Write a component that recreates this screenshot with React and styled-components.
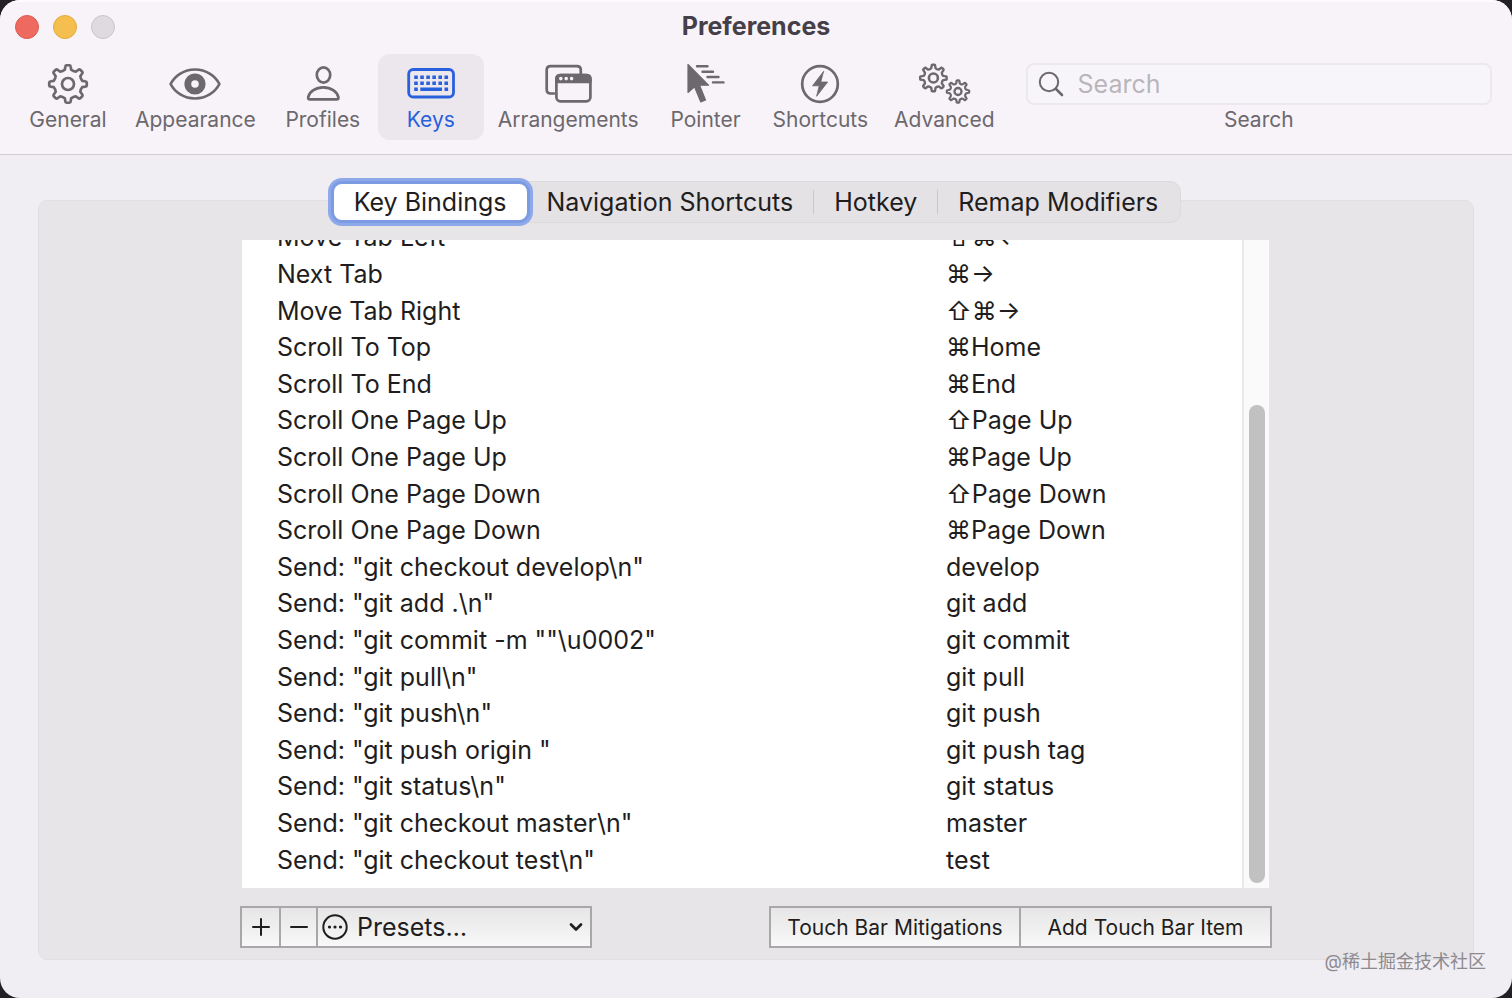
import React, {useState} from 'react'
import styled, {createGlobalStyle} from 'styled-components'

const GlobalStyle = createGlobalStyle`
  * {
    box-sizing: border-box;
  }
  body {
    margin: 0;
    background: #222024;
    font-family: Inter, 'Noto Sans CJK SC', sans-serif;
    color: #1f1d20;
  }
  button,
  input,
  select {
    font: inherit;
    color: inherit;
    margin: 0;
    padding: 0;
    border: 0;
    background: none;
  }
`

const Window = styled.main`
  position: relative;
  display: flex;
  flex-direction: column;
  min-height: 100vh;
  border-radius: 20px;
  background: #f0eef3;
  overflow: hidden;
`

const Header = styled.header`
  background: #f7f3f9;
  border-bottom: 1px solid #cfcbd1;
  box-shadow: inset 0 2px 0 #fcfafd;
`

const TitleBar = styled.div`
  display: grid;
  grid-template-columns: 1fr auto 1fr;
  align-items: center;
  height: 54px;
  padding: 0 15px;
`

const Lights = styled.div`
  display: flex;
  gap: 14px;
`

const Light = styled.button`
  width: 24px;
  height: 24px;
  border-radius: 50%;
  border: 1px solid ${p => p.$edge};
  background: ${p => p.$color};
`

const Title = styled.h1`
  align-self: start;
  margin: 0;
  font-size: 25px;
  line-height: 52px;
  font-weight: 700;
  color: #454047;
`

const Toolbar = styled.nav`
  display: flex;
  gap: 2px;
  padding: 0 20px 14px 15px;
`

const ToolButton = styled.button`
  display: flex;
  flex-direction: column;
  align-items: center;
  min-width: 106px;
  height: 86px;
  padding: 8px 12px 0;
  border-radius: 12px;
  background: ${p => (p.$active ? '#ebe7ed' : 'transparent')};
  color: ${p => (p.$active ? '#2860de' : '#6c686d')};
  font-size: 21px;
  line-height: 28px;

  svg {
    display: block;
    flex: none;
  }
`

const SearchItem = styled.label`
  display: flex;
  flex: 1;
  flex-direction: column;
  align-items: center;
  gap: 1px;
  margin-left: 17px;
  padding-top: 9px;
  color: #6c686d;
  font-size: 21px;
  line-height: 28px;
`

const SearchField = styled.span`
  display: flex;
  align-items: center;
  gap: 14px;
  width: 100%;
  height: 42px;
  padding: 0 10px;
  border: 2px solid #ece8ee;
  border-radius: 8px;
  background: #f8f5fa;
`

const SearchInput = styled.input`
  flex: 1;
  min-width: 0;
  font-size: 25px;
  outline: 0;

  &::placeholder {
    color: #b9b5ba;
    opacity: 1;
  }
`

const Panel = styled.section`
  display: flex;
  flex: 1;
  flex-direction: column;
  align-items: center;
  margin: 45px 38px 38px;
  padding: 0 20px 11px;
  border: 1px solid #e2dfe4;
  border-radius: 9px;
  background: #e7e5e8;
`

const Tabs = styled.div`
  display: flex;
  align-items: center;
  height: 42px;
  margin: -20px 0 17px;
  padding: 0 2px;
  border: 1px solid #dddade;
  border-radius: 11px;
  background: #e4e2e5;
`

const Tab = styled.button`
  height: 36px;
  padding: 0 20px;
  border-radius: 8px;
  background: ${p => (p.$active ? '#fff' : 'transparent')};
  box-shadow: ${p => (p.$active ? '0 0 0 3px #7c9be2, 0 0 0 6px #8ea9ea' : 'none')};
  font-size: 25px;
  line-height: 34px;
  white-space: nowrap;
`

const Divider = styled.span`
  width: 1px;
  height: 24px;
  background: #cbc8cc;
`

const Content = styled.div`
  display: flex;
  flex: 1;
  flex-direction: column;
  gap: 18px;
  width: 100%;
  max-width: 1032px;
`

const List = styled.div`
  display: flex;
  flex: 1;
  margin: 0 3px 0 2px;
  background: #fff;
`

const Rows = styled.div`
  display: flex;
  flex: 1;
  flex-direction: column;
  justify-content: flex-end;
  height: 648px;
  padding: 0 35px 10px;
  overflow: hidden;
`

const Table = styled.table`
  flex: none;
  width: 100%;
  height: 659px;
  border-collapse: collapse;
  table-layout: fixed;
  font-size: 25px;
  line-height: 30px;
`

const Cell = styled.td`
  width: ${p => p.$width};
  padding: 0;
  white-space: nowrap;
`

const ScrollTrack = styled.div`
  display: flex;
  flex-direction: column;
  justify-content: flex-end;
  width: 27px;
  padding: 5px;
  border-left: 2px solid #e9e9e9;
  background: #fafafa;
`

const ScrollThumb = styled.div`
  width: 16px;
  height: 478px;
  border-radius: 8px;
  background: #c1c1c1;
`

const Actions = styled.div`
  display: flex;
  justify-content: space-between;
`

const ButtonGroup = styled.div`
  display: flex;
  height: 42px;
  border: 2px solid #a9a7aa;
  background: linear-gradient(#e6e6e6, #f8f8f8);

  > * + * {
    border-left: 2px solid #a9a7aa;
  }
`

const ActionButton = styled.button`
  display: flex;
  align-items: center;
  justify-content: center;
  width: ${p => p.$width};
  font-size: 21px;
  white-space: nowrap;
`

const Presets = styled.label`
  display: flex;
  align-items: center;
  gap: 9px;
  width: 274px;
  padding: 0 6px 0 4px;
`

const PresetSelect = styled.select`
  flex: 1;
  min-width: 0;
  appearance: none;
  font-size: 25px;
`

const Watermark = styled.div`
  position: absolute;
  right: 26px;
  bottom: 23px;
  font-size: 18px;
  line-height: 26px;
  color: #8d8a8f;
`

const gearPath = (cx, cy, outer, inner, teeth = 8) => {
  const step = (Math.PI * 2) / teeth
  const point = (r, a) => `${(cx + r * Math.sin(a)).toFixed(2)} ${(cy - r * Math.cos(a)).toFixed(2)}`
  let d = ''
  for (let i = 0; i < teeth; i++) {
    const a = i * step
    d += `${i ? 'L' : 'M'}${point(inner, a - step * 0.28)}`
    d += `L${point(outer - 1.5, a - step * 0.2)}Q${point(outer, a - step * 0.18)} ${point(outer, a - step * 0.1)}`
    d += `L${point(outer, a + step * 0.1)}Q${point(outer, a + step * 0.18)} ${point(outer - 1.5, a + step * 0.2)}`
    d += `L${point(inner, a + step * 0.28)}Q${point(inner - 1, a + step * 0.5)} ${point(inner, a + step * 0.72)}`
  }
  return d + 'Z'
}

const Icon = ({width = 54, height = 44, children}) => (
  <svg
    width={width}
    height={height}
    viewBox={`0 0 ${width} ${height}`}
    fill="none"
    stroke="currentColor"
    strokeWidth="2.7"
    strokeLinecap="round"
    strokeLinejoin="round"
    aria-hidden="true"
  >
    {children}
  </svg>
)

const GearIcon = () => (
  <Icon>
    <path d={gearPath(27, 22, 18.8, 14.6)} />
    <circle cx="27" cy="22" r="6" />
  </Icon>
)

const EyeIcon = () => (
  <Icon>
    <path d="M2.6 22C7 13.500 16 7.500 27 7.500S47 13.500 51.400 22C47 30.500 38 36.500 27 36.500S7 30.500 2.600 22Z" />
    <circle cx="27" cy="22" r="7.2" strokeWidth="6.800" />
  </Icon>
)

const PersonIcon = () => (
  <Icon>
    <ellipse cx="27.500" cy="13" rx="6.700" ry="7.600" />
    <path d="M14 37.400C12.300 37.400 11.900 36.400 12.300 34.800C13.700 29.600 19.500 25.400 27.300 25.400S40.900 29.600 42.300 34.800C42.700 36.400 42.300 37.400 40.600 37.400Z" />
  </Icon>
)

const KeyboardIcon = () => (
  <Icon>
    <rect x="4.700" y="7.500" width="44.800" height="27.500" rx="4.500" strokeWidth="2.800" />
    <path d="M10.200 15.300H44.100M10.200 21.300H44.100" strokeWidth="3.600" strokeDasharray="3.600 2.450" strokeLinecap="butt" />
    <path d="M10.200 27.300H13.800M16.300 27.300H38M40.500 27.300H44.100" strokeWidth="3.600" strokeLinecap="butt" />
  </Icon>
)

const WindowsIcon = () => (
  <Icon>
    <path d="M13 31.500H9.700Q5.700 31.500 5.700 27.500V8.100Q5.700 4.100 9.700 4.100H35.800Q39.800 4.100 39.800 8.100V12" />
    <rect x="15.400" y="13" width="34" height="26.300" rx="4" />
    <path d="M15.400 19.800V17Q15.400 13 19.400 13H45.400Q49.400 13 49.400 17V19.800Z" fill="currentColor" />
    <path d="M19.800 16.600h.01M25.200 16.600h.01M30.600 16.600h.01" stroke="#f7f3f9" strokeWidth="3.600" />
  </Icon>
)

const PointerIcon = () => (
  <Icon>
    <path d="M9 2.500V30.500L15.500 24.800L21.800 40L26.500 38L20.600 23.200H29.500Z" fill="currentColor" strokeWidth="1.200" />
    <path d="M18 4.300H28.500M23.500 9.700H34M28.500 15H39.500M34 20.400H44.500" strokeWidth="2.400" />
  </Icon>
)

const BoltIcon = () => (
  <Icon>
    <circle cx="27" cy="22" r="17.800" />
    <path d="M30.500 9.500L19.500 23.800H26.200L23.600 34.300L34.700 20H28Z" fill="currentColor" strokeWidth="0.800" />
  </Icon>
)

const GearsIcon = () => (
  <Icon>
    <path d={gearPath(16.4, 16, 13.3, 10)} strokeWidth="2.400" />
    <circle cx="16.400" cy="16" r="4.500" strokeWidth="2.600" />
    <path d={gearPath(41, 29.5, 11.2, 8.4)} strokeWidth="2.200" />
    <circle cx="41" cy="29.500" r="3.500" strokeWidth="2.300" />
  </Icon>
)

const tools = [
  {label: 'General', icon: GearIcon},
  {label: 'Appearance', icon: EyeIcon},
  {label: 'Profiles', icon: PersonIcon},
  {label: 'Keys', icon: KeyboardIcon},
  {label: 'Arrangements', icon: WindowsIcon},
  {label: 'Pointer', icon: PointerIcon},
  {label: 'Shortcuts', icon: BoltIcon},
  {label: 'Advanced', icon: GearsIcon},
]

const tabs = ['Key Bindings', 'Navigation Shortcuts', 'Hotkey', 'Remap Modifiers']

const bindings = [
  ['Move Tab Left', '⇧⌘←'],
  ['Next Tab', '⌘→'],
  ['Move Tab Right', '⇧⌘→'],
  ['Scroll To Top', '⌘Home'],
  ['Scroll To End', '⌘End'],
  ['Scroll One Page Up', '⇧Page Up'],
  ['Scroll One Page Up', '⌘Page Up'],
  ['Scroll One Page Down', '⇧Page Down'],
  ['Scroll One Page Down', '⌘Page Down'],
  ['Send: "git checkout develop\\n"', 'develop'],
  ['Send: "git add .\\n"', 'git add'],
  ['Send: "git commit -m ""\\u0002"', 'git commit'],
  ['Send: "git pull\\n"', 'git pull'],
  ['Send: "git push\\n"', 'git push'],
  ['Send: "git push origin "', 'git push tag'],
  ['Send: "git status\\n"', 'git status'],
  ['Send: "git checkout master\\n"', 'master'],
  ['Send: "git checkout test\\n"', 'test'],
]

export default function App() {
  const [tool, setTool] = useState('Keys')
  const [tab, setTab] = useState('Key Bindings')

  return (
    <>
      <GlobalStyle />
      <Window>
        <Header>
          <TitleBar>
            <Lights>
              <Light $color="#ee6a60" $edge="#dc5b52" aria-label="Close" />
              <Light $color="#f5bf4f" $edge="#e0ab3f" aria-label="Minimize" />
              <Light $color="#dedae0" $edge="#c9c5cb" aria-label="Zoom" />
            </Lights>
            <Title>Preferences</Title>
          </TitleBar>
          <Toolbar>
            {tools.map(({label, icon: ToolIcon}) => (
              <ToolButton key={label} $active={label === tool} onClick={() => setTool(label)}>
                <ToolIcon />
                {label}
              </ToolButton>
            ))}
            <SearchItem>
              <SearchField>
                <Icon width={26} height={26}>
                  <circle cx="11" cy="11" r="9.200" strokeWidth="2" />
                  <path d="M18 18L24 24" strokeWidth="2.600" />
                </Icon>
                <SearchInput type="text" placeholder="Search" />
              </SearchField>
              Search
            </SearchItem>
          </Toolbar>
        </Header>
        <Panel>
          <Tabs role="tablist">
            {tabs.map((name, i) => (
              <React.Fragment key={name}>
                {i > 1 && <Divider />}
                <Tab role="tab" aria-selected={name === tab} $active={name === tab} onClick={() => setTab(name)}>
                  {name}
                </Tab>
              </React.Fragment>
            ))}
          </Tabs>
          <Content>
            <List>
              <Rows>
                <Table>
                  <tbody>
                    {bindings.map(([action, keys], i) => (
                      <tr key={i}>
                        <Cell $width="669px">{action}</Cell>
                        <Cell>{keys}</Cell>
                      </tr>
                    ))}
                  </tbody>
                </Table>
              </Rows>
              <ScrollTrack>
                <ScrollThumb />
              </ScrollTrack>
            </List>
            <Actions>
              <ButtonGroup>
                <ActionButton $width="37px" aria-label="Add">
                  <Icon width={18} height={18}>
                    <path d="M1 9H17M9 1V17" strokeWidth="2" />
                  </Icon>
                </ActionButton>
                <ActionButton $width="37px" aria-label="Remove">
                  <Icon width={18} height={18}>
                    <path d="M1 9H17" strokeWidth="2" />
                  </Icon>
                </ActionButton>
                <Presets>
                  <Icon width={26} height={26}>
                    <circle cx="13" cy="13" r="11.700" strokeWidth="2" />
                    <path d="M7.500 13h.01M13 13h.01M18.500 13h.01" strokeWidth="3.200" />
                  </Icon>
                  <PresetSelect aria-label="Presets">
                    <option>Presets…</option>
                  </PresetSelect>
                  <Icon width={16} height={12}>
                    <path d="M3 3.500L8 8.500L13 3.500" strokeWidth="2.700" />
                  </Icon>
                </Presets>
              </ButtonGroup>
              <ButtonGroup>
                <ActionButton $width="248px">Touch Bar Mitigations</ActionButton>
                <ActionButton $width="251px">Add Touch Bar Item</ActionButton>
              </ButtonGroup>
            </Actions>
          </Content>
        </Panel>
        <Watermark>@稀土掘金技术社区</Watermark>
      </Window>
    </>
  )
}
